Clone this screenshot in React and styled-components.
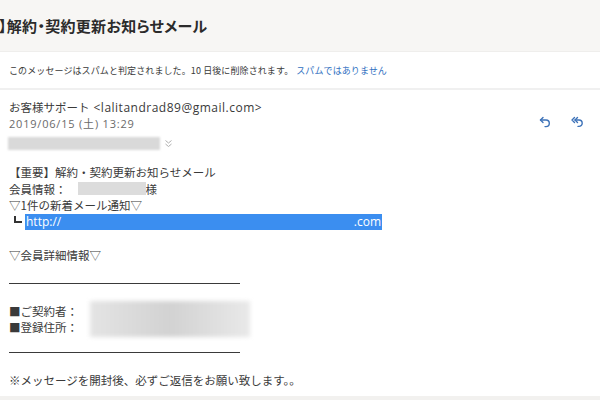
import React from "react";
import styled, { createGlobalStyle } from "styled-components";

const Global = createGlobalStyle`
  html, body { margin: 0; padding: 0; background: #ffffff; }
  body {
    width: 600px;
    height: 400px;
    overflow: hidden;
    font-family: "Noto Sans CJK JP", "Noto Sans", sans-serif;
    color: #333333;
  }
`;

const Page = styled.div`
  width: 600px;
  height: 400px;
  display: flex;
  flex-direction: column;
  background: #ffffff;
  overflow: hidden;
`;

const Header = styled.div`
  height: 51px;
  flex: none;
  display: flex;
  align-items: center;
  background: #f7f6f4;
  border-bottom: 1px solid #efeeec;
`;

const Title = styled.h1`
  margin: 0;
  font-size: 15px;
  font-weight: 700;
  color: #2b2b2b;
  font-feature-settings: "palt";
  letter-spacing: 0.3px;
  text-indent: -1px;
`;

const Notice = styled.div`
  height: 36px;
  flex: none;
  display: flex;
  align-items: center;
  padding-left: 9px;
  font-size: 9px;
  color: #3a3a3a;
  letter-spacing: 0.1px;
  white-space: pre;
  border-bottom: 2px solid #f0f0f0;
`;

const NoticeLink = styled.span`
  color: #2f6fbf;
  margin-left: 3px;
`;

const Meta = styled.div`
  display: flex;
  justify-content: space-between;
  padding: 9px 16px 0 9px;
`;

const Sender = styled.div`
  display: flex;
  flex-direction: column;
`;

const From = styled.div`
  font-size: 11.5px;
  line-height: 17px;
  color: #3a3a3a;
`;

const Address = styled.span`
  font-family: "Open Sans", "Noto Sans", sans-serif;
  font-size: 12px;
  letter-spacing: 0.5px;
  margin-left: 4px;
`;

const DateLine = styled.div`
  font-size: 11px;
  line-height: 16px;
  color: #6a6a6a;
  letter-spacing: 0.8px;
  font-family: "Open Sans", "Noto Sans CJK JP", sans-serif;
`;

const Recipients = styled.div`
  display: flex;
  align-items: center;
  gap: 4px;
  margin-top: 5px;
  margin-left: -1px;
`;

const Blur = styled.div`
  width: ${(p) => p.w}px;
  height: ${(p) => p.h}px;
  background: ${(p) => p.bg || "#d9d9d9"};
  filter: blur(${(p) => p.blur || 1}px);
  margin: 0 ${(p) => p.mr || 0}px 0 ${(p) => p.ml || 0}px;
  flex: none;
`;

const Actions = styled.div`
  display: flex;
  gap: 18px;
  padding-top: 16px;
`;

const Icon = styled.svg`
  width: 14px;
  height: 14px;
  color: #3d72b8;
`;

const Body = styled.div`
  padding: 14px 0 0 9px;
  display: flex;
  flex-direction: column;
  font-size: 11.5px;
  color: #3a3a3a;
`;

const Line = styled.div`
  height: 16.5px;
  line-height: 16.5px;
  display: flex;
  align-items: center;
  white-space: nowrap;
  margin-top: ${(p) => p.mt || 0}px;
`;

const Corner = styled.span`
  display: inline-block;
  width: 8px;
  height: 7px;
  border-left: 2px solid #333;
  border-bottom: 2px solid #333;
  margin: 0 3px 4px 5px;
  box-sizing: border-box;
`;

const Selected = styled.span`
  display: flex;
  justify-content: space-between;
  align-items: center;
  width: 357px;
  height: 16px;
  background: #3b8ef0;
  color: #ffffff;
  font-family: "Open Sans", "Noto Sans", sans-serif;
  font-size: 12px;
  padding: 0 1px;
  box-sizing: border-box;
`;

const Rule = styled.div`
  width: 231px;
  border-top: 1.5px solid #3a3a3a;
  margin: ${(p) => p.m};
`;

const Members = styled.div`
  display: flex;
  align-items: center;
`;

const MemberLabels = styled.div`
  display: flex;
  flex-direction: column;
`;

const Footer = styled.div`
  margin-top: auto;
  height: 4px;
  background: #f2f1ef;
  flex: none;
`;

const Chevron = () => (
  <svg width="9" height="9" viewBox="0 0 9 9" fill="none" stroke="#b0b0b0" strokeWidth="1">
    <path d="M1.5 1.5 L4.5 4 L7.5 1.5" />
    <path d="M1.5 5 L4.5 7.5 L7.5 5" />
  </svg>
);

const Reply = () => (
  <Icon viewBox="0 0 14 14" fill="none" stroke="currentColor" strokeWidth="1.4" strokeLinecap="round" strokeLinejoin="round">
    <path d="M5 2.5 L2.5 5 L5 7.5" />
    <path d="M2.5 5 H8 A3.3 3.3 0 0 1 8 11.6 H7" />
  </Icon>
);

const ReplyAll = () => (
  <Icon viewBox="0 0 14 14" fill="none" stroke="currentColor" strokeWidth="1.4" strokeLinecap="round" strokeLinejoin="round">
    <path d="M4.5 2.5 L2 5 L4.5 7.5" />
    <path d="M7.5 2.5 L5 5 L7.5 7.5" />
    <path d="M5 5 H9 A3.2 3.2 0 0 1 9 11.4 H8" />
  </Icon>
);

export default function App() {
  return (
    <Page>
      <Global />
      <Header>
        <Title>】解約・契約更新お知らせメール</Title>
      </Header>
      <Notice>
        {"このメッセージはスパムと判定されました。10 日後に削除されます。"}
        <NoticeLink>スパムではありません</NoticeLink>
      </Notice>
      <Meta>
        <Sender>
          <From>
            お客様サポート
            <Address>&lt;lalitandrad89@gmail.com&gt;</Address>
          </From>
          <DateLine>2019/06/15 (土) 13:29</DateLine>
          <Recipients>
            <Blur w={152} h={13} />
            <Chevron />
          </Recipients>
        </Sender>
        <Actions>
          <Reply />
          <ReplyAll />
        </Actions>
      </Meta>
      <Body>
        <Line>【重要】解約・契約更新お知らせメール</Line>
        <Line>
          会員情報：
          <Blur w={68} h={13} bg="#dcdcdc" blur={0.6} ml={11} />
          様
        </Line>
        <Line>▽1件の新着メール通知▽</Line>
        <Line>
          <Corner />
          <Selected>
            <span>http://</span>
            <span>.com</span>
          </Selected>
        </Line>
        <Line mt={16.5}>▽会員詳細情報▽</Line>
        <Rule m="20px 0 17px" />
        <Members>
          <MemberLabels>
            <Line>■ご契約者：</Line>
            <Line>■登録住所：</Line>
          </MemberLabels>
          <Blur
            w={160}
            h={36}
            blur={2}
            ml={12}
            bg="linear-gradient(90deg, #e4e4e4 0%, #d2d2d2 50%, #e9e9e9 100%)"
          />
        </Members>
        <Rule m="15px 0 19px" />
        <Line>※メッセージを開封後、必ずご返信をお願い致します。。</Line>
      </Body>
      <Footer />
    </Page>
  );
}
